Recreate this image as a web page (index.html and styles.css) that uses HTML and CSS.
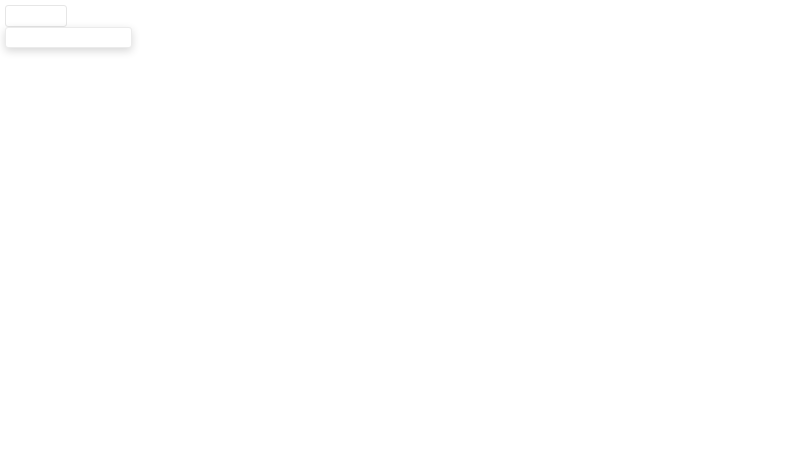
FILE: index.html
```html
<!DOCTYPE html>
<html>
<head>
<meta charset="utf-8">
<link rel="stylesheet" href="styles.css">
</head>
<body>
<div class="dropdown">
  <button class="toggle" type="button"></button>
  <div class="menu"></div>
</div>
</body>
</html>
```
FILE: styles.css
```css
html, body { margin: 0; padding: 0; background: #fff; font-family: "Liberation Sans", Arial, sans-serif; min-height: 450px; }
body { padding: 5px; box-sizing: border-box; }
.dropdown { display: flex; flex-direction: column; align-items: flex-start; }
.toggle {
  display: block;
  width: 62px;
  height: 22px;
  padding: 0;
  margin: 0;
  background: #fff;
  border: 1px solid #e6e6e6;
  border-radius: 3px;
}
.menu {
  width: 127px;
  height: 21px;
  box-sizing: border-box;
  background: #fff;
  border: 1px solid #ebebeb;
  border-radius: 3px;
  box-shadow: 0 3px 8px rgba(0,0,0,0.16);
}
```
